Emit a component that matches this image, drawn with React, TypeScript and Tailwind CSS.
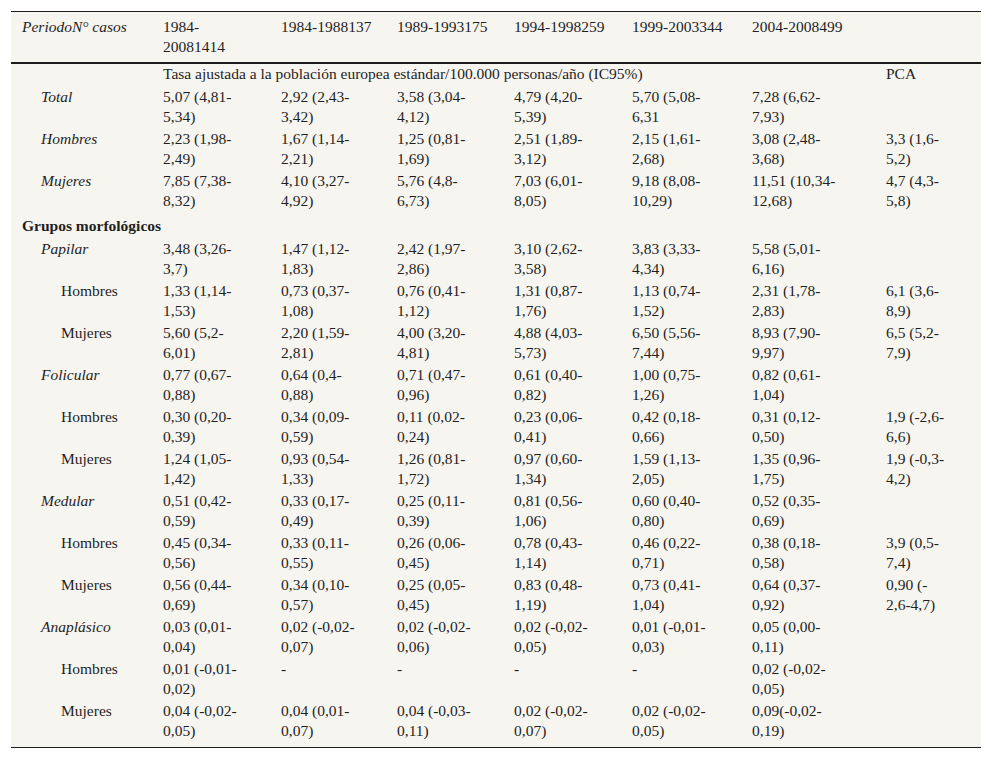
type Row = {
  label: string;
  level: 0 | 1 | 2;
  italic?: boolean;
  cells: string[];
};

const rows: Row[] = [
  { label: "Total", level: 1, italic: true, cells: ["5,07 (4,81-|5,34)", "2,92 (2,43-|3,42)", "3,58 (3,04-|4,12)", "4,79 (4,20-|5,39)", "5,70 (5,08-|6,31", "7,28 (6,62-|7,93)", ""] },
  { label: "Hombres", level: 1, italic: true, cells: ["2,23 (1,98-|2,49)", "1,67 (1,14-|2,21)", "1,25 (0,81-|1,69)", "2,51 (1,89-|3,12)", "2,15 (1,61-|2,68)", "3,08 (2,48-|3,68)", "3,3 (1,6-|5,2)"] },
  { label: "Mujeres", level: 1, italic: true, cells: ["7,85 (7,38-|8,32)", "4,10 (3,27-|4,92)", "5,76 (4,8-|6,73)", "7,03 (6,01-|8,05)", "9,18 (8,08-|10,29)", "11,51 (10,34-|12,68)", "4,7 (4,3-|5,8)"] },
];

const groups: Row[] = [
  { label: "Papilar", level: 1, italic: true, cells: ["3,48 (3,26-|3,7)", "1,47 (1,12-|1,83)", "2,42 (1,97-|2,86)", "3,10 (2,62-|3,58)", "3,83 (3,33-|4,34)", "5,58 (5,01-|6,16)", ""] },
  { label: "Hombres", level: 2, cells: ["1,33 (1,14-|1,53)", "0,73 (0,37-|1,08)", "0,76 (0,41-|1,12)", "1,31 (0,87-|1,76)", "1,13 (0,74-|1,52)", "2,31 (1,78-|2,83)", "6,1 (3,6-|8,9)"] },
  { label: "Mujeres", level: 2, cells: ["5,60 (5,2-|6,01)", "2,20 (1,59-|2,81)", "4,00 (3,20-|4,81)", "4,88 (4,03-|5,73)", "6,50 (5,56-|7,44)", "8,93 (7,90-|9,97)", "6,5 (5,2-|7,9)"] },
  { label: "Folicular", level: 1, italic: true, cells: ["0,77 (0,67-|0,88)", "0,64 (0,4-|0,88)", "0,71 (0,47-|0,96)", "0,61 (0,40-|0,82)", "1,00 (0,75-|1,26)", "0,82 (0,61-|1,04)", ""] },
  { label: "Hombres", level: 2, cells: ["0,30 (0,20-|0,39)", "0,34 (0,09-|0,59)", "0,11 (0,02-|0,24)", "0,23 (0,06-|0,41)", "0,42 (0,18-|0,66)", "0,31 (0,12-|0,50)", "1,9 (-2,6-|6,6)"] },
  { label: "Mujeres", level: 2, cells: ["1,24 (1,05-|1,42)", "0,93 (0,54-|1,33)", "1,26 (0,81-|1,72)", "0,97 (0,60-|1,34)", "1,59 (1,13-|2,05)", "1,35 (0,96-|1,75)", "1,9 (-0,3-|4,2)"] },
  { label: "Medular", level: 1, italic: true, cells: ["0,51 (0,42-|0,59)", "0,33 (0,17-|0,49)", "0,25 (0,11-|0,39)", "0,81 (0,56-|1,06)", "0,60 (0,40-|0,80)", "0,52 (0,35-|0,69)", ""] },
  { label: "Hombres", level: 2, cells: ["0,45 (0,34-|0,56)", "0,33 (0,11-|0,55)", "0,26 (0,06-|0,45)", "0,78 (0,43-|1,14)", "0,46 (0,22-|0,71)", "0,38 (0,18-|0,58)", "3,9 (0,5-|7,4)"] },
  { label: "Mujeres", level: 2, cells: ["0,56 (0,44-|0,69)", "0,34 (0,10-|0,57)", "0,25 (0,05-|0,45)", "0,83 (0,48-|1,19)", "0,73 (0,41-|1,04)", "0,64 (0,37-|0,92)", "0,90 (-|2,6-4,7)"] },
  { label: "Anaplásico", level: 1, italic: true, cells: ["0,03 (0,01-|0,04)", "0,02 (-0,02-|0,07)", "0,02 (-0,02-|0,06)", "0,02 (-0,02-|0,05)", "0,01 (-0,01-|0,03)", "0,05 (0,00-|0,11)", ""] },
  { label: "Hombres", level: 2, cells: ["0,01 (-0,01-|0,02)", "-", "-", "-", "-", "0,02 (-0,02-|0,05)", ""] },
  { label: "Mujeres", level: 2, cells: ["0,04 (-0,02-|0,05)", "0,04 (0,01-|0,07)", "0,04 (-0,03-|0,11)", "0,02 (-0,02-|0,07)", "0,02 (-0,02-|0,05)", "0,09(-0,02-|0,19)", ""] },
];

const headers = ["1984-|20081414", "1984-1988137", "1989-1993175", "1994-1998259", "1999-2003344", "2004-2008499", ""];
const widths = ["w-[141px]", "w-[118px]", "w-[116px]", "w-[117px]", "w-[118px]", "w-[120px]", "w-[134px]", "w-[106px]"];

const Lines = ({ text }: { text: string }) => (
  <>
    {text.split("|").map((line, i) => (
      <span key={i} className="block">
        {line}
      </span>
    ))}
  </>
);

const indent = { 0: "pl-[11px]", 1: "pl-[30px]", 2: "pl-[50px]" };

const DataRow = ({ row, last }: { row: Row; last?: boolean }) => {
  const pad = last ? "pt-[1px] pb-[6px] border-b border-[#1c1c1c]" : "py-[1px]";
  return (
    <tr>
      <td className={`${indent[row.level]} pr-2 align-top ${pad} ${row.italic ? "italic" : ""}`}>{row.label}</td>
      {row.cells.map((c, i) => (
        <td key={i} className={`pl-[11px] align-top whitespace-nowrap ${pad}`}>
          <Lines text={c} />
        </td>
      ))}
    </tr>
  );
};

export default function App() {
  return (
    <div className="min-h-screen bg-white pt-[11px] pl-[11px] font-['Liberation_Serif',serif] text-[15.5px] leading-[20px] text-[#1f1f1f]">
      <table className="table-fixed w-[970px] border-separate border-spacing-0 border-t border-[#1c1c1c] bg-[#f7f5f0]">
        <colgroup>
          {widths.map((w, i) => (
            <col key={i} className={w} />
          ))}
        </colgroup>
        <thead>
          <tr>
            <th className="pl-[11px] pt-[5px] pb-[5px] text-left font-normal italic align-top border-b-2 border-[#1c1c1c]">
              PeriodoN° casos
            </th>
            {headers.map((h, i) => (
              <th key={i} className="pl-[11px] pt-[5px] pb-[5px] text-left font-normal align-top whitespace-nowrap border-b-2 border-[#1c1c1c]">
                <Lines text={h} />
              </th>
            ))}
          </tr>
        </thead>
        <tbody>
          <tr>
            <td className="pt-0 pb-[2px]" />
            <td colSpan={6} className="pl-[11px] pt-0 pb-[2px] whitespace-nowrap">
              Tasa ajustada a la población europea estándar/100.000 personas/año (IC95%)
            </td>
            <td className="pl-[11px] pt-0 pb-[2px]">PCA</td>
          </tr>
          {rows.map((r, i) => (
            <DataRow key={i} row={r} />
          ))}
          <tr>
            <td colSpan={8} className="pl-[11px] pt-[4px] pb-[2px] font-bold whitespace-nowrap">
              Grupos morfológicos
            </td>
          </tr>
          {groups.map((r, i) => (
            <DataRow key={i} row={r} last={i === groups.length - 1} />
          ))}
        </tbody>
      </table>
    </div>
  );
}
